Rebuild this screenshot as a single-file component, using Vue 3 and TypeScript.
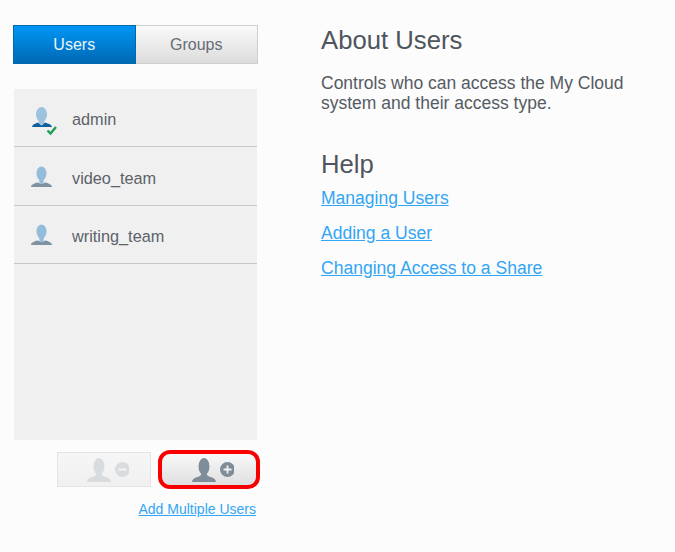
<script setup lang="ts">
const users = [
  { name: 'admin', admin: true },
  { name: 'video_team', admin: false },
  { name: 'writing_team', admin: false },
]
const helpLinks = ['Managing Users', 'Adding a User', 'Changing Access to a Share']
</script>

<template>
  <div class="page">
    <div class="left">
      <div class="tabs">
        <button class="tab active">Users</button>
        <button class="tab">Groups</button>
      </div>
      <div class="list">
        <div v-for="u in users" :key="u.name" class="row">
          <svg class="user-icon" width="28" height="28" viewBox="0 0 28 28">
            <template v-if="u.admin">
              <path d="M5 23c.3-2.400 2.500-3.200 6-4.500l3.500 3 3.500-3c3.500 1.300 6.700 2.100 7 4.500z" fill="#0f5f9c" />
              <ellipse cx="14.500" cy="10.500" rx="5.500" ry="7.500" fill="#9cc2de" />
              <path d="M11.500 15h6l-.5 4.500-2.500 2-2.500-2z" fill="#9cc2de" />
              <path d="M20.500 26.500l3 3 5.500-6.500" fill="none" stroke="#1f9d55" stroke-width="2.400" />
            </template>
            <template v-else>
              <path d="M4 25c.3-2.600 3-3.500 6.500-4.500l4 1.500 4-1.500c3.500 1 6.200 1.900 6.500 4.500z" fill="#7f929f" />
              <ellipse cx="14.500" cy="11.500" rx="5" ry="7" fill="#93bcd8" />
              <path d="M12 16h5l-.5 5-2 1.500-2-1.500z" fill="#93bcd8" />
            </template>
          </svg>
          <span>{{ u.name }}</span>
        </div>
      </div>
      <div class="actions">
        <button class="act disabled">
          <svg width="50" height="28" viewBox="0 0 50 28">
            <path d="M8 26c.5-3.500 3.500-4.500 7-5.500 1.200-.4 2-1.200 2-2.500h6c0 1.300.8 2.100 2 2.500 3.500 1 6.500 2 7 5.500z" fill="#d8dcdf" />
            <ellipse cx="20" cy="10.500" rx="5.500" ry="8.500" fill="#d8dcdf" />
            <circle cx="43.500" cy="13.500" r="7.500" fill="#d8dcdf" />
            <rect x="39.500" y="12.500" width="8" height="2" fill="#f4f4f4" />
          </svg>
        </button>
        <div class="highlight">
          <button class="act">
            <svg width="50" height="28" viewBox="0 0 50 28">
              <path d="M8 26c.5-3.500 3.500-4.500 7-5.500 1.200-.4 2-1.200 2-2.500h6c0 1.300.8 2.100 2 2.500 3.500 1 6.500 2 7 5.500z" fill="#7f8d99" />
              <ellipse cx="20" cy="10.500" rx="5.500" ry="8.500" fill="#7f8d99" />
              <circle cx="43.500" cy="13.500" r="7.500" fill="#7f8d99" />
              <path d="M39.500 13.500h8M43.500 9.500v8" stroke="#f2f2f2" stroke-width="1.800" />
            </svg>
          </button>
        </div>
      </div>
      <a class="multi" href="#">Add Multiple Users</a>
    </div>
    <div class="right">
      <h2>About Users</h2>
      <p>Controls who can access the My Cloud system and their access type.</p>
      <h2 class="help">Help</h2>
      <a v-for="l in helpLinks" :key="l" class="help-link" href="#">{{ l }}</a>
    </div>
  </div>
</template>

<style scoped>
.page {
  width: 675px;
  height: 552px;
  box-sizing: border-box;
  padding: 25px 0 0 13px;
  display: flex;
  background: #fcfcfc;
  font-family: "Liberation Sans", Arial, sans-serif;
  color: #555b63;
  overflow: hidden;
}

.left {
  width: 246px;
  display: flex;
  flex-direction: column;
}

.tabs {
  display: flex;
  width: 245px;
  height: 39px;
}

.tab {
  width: 122.500px;
  height: 39px;
  padding: 0;
  border: 1px solid #cfcfcf;
  border-left: none;
  background: linear-gradient(#fafafa, #dcdcdc);
  font: 16px "Liberation Sans", Arial, sans-serif;
  color: #666c74;
}

.tab.active {
  border: 1px solid #0069ad;
  background: linear-gradient(#0096f5, #0069b4);
  color: #eaf5fd;
}

.list {
  width: 243px;
  height: 351px;
  margin: 25px 0 0 1px;
  background: #f0f0f0;
}

.row {
  height: 58.400px;
  box-sizing: border-box;
  border-bottom: 1px solid #c8c8c8;
  display: flex;
  align-items: center;
  padding-left: 13px;
  padding-top: 4px;
  font-size: 16.300px;
  color: #5c6269;
}

.row span {
  margin-left: 17px;
}

.user-icon {
  flex: none;
  overflow: visible;
  margin-top: -4px;
}

.actions {
  display: flex;
  justify-content: flex-end;
  align-items: center;
  gap: 7px;
  margin-top: 10px;
  height: 39px;
  width: 247px;
}

.act {
  width: 94px;
  height: 35px;
  padding: 0;
  border: 1px solid #e4e4e4;
  background: linear-gradient(#f6f6f6, #f0f0f0);
  display: flex;
  align-items: center;
  justify-content: center;
}

.highlight {
  border: 4px solid #f80000;
  border-radius: 12px;
  overflow: hidden;
  height: 31px;
  width: 94px;
  display: flex;
  align-items: center;
  justify-content: center;
  background: linear-gradient(#f8f8f8, #e0e0e0);
}

.highlight .act {
  border: none;
  background: none;
  height: 31px;
}

.multi {
  align-self: flex-end;
  margin: 12px 3px 0 0;
  font-size: 14px;
  color: #33a5f5;
}

.right {
  margin-left: 62px;
  width: 340px;
}

h2 {
  margin: 0;
  font-size: 25.700px;
  font-weight: 400;
  line-height: 30px;
  color: #4f555c;
}

p {
  margin: 18px 0 0;
  font-size: 17.500px;
  line-height: 20px;
  width: 320px;
}

h2.help {
  margin-top: 36px;
}

.help-link {
  display: block;
  width: fit-content;
  margin-top: 15px;
  font-size: 17.550px;
  line-height: 20px;
  color: #33a5f5;
}

.help + .help-link {
  margin-top: 9px;
}
</style>
